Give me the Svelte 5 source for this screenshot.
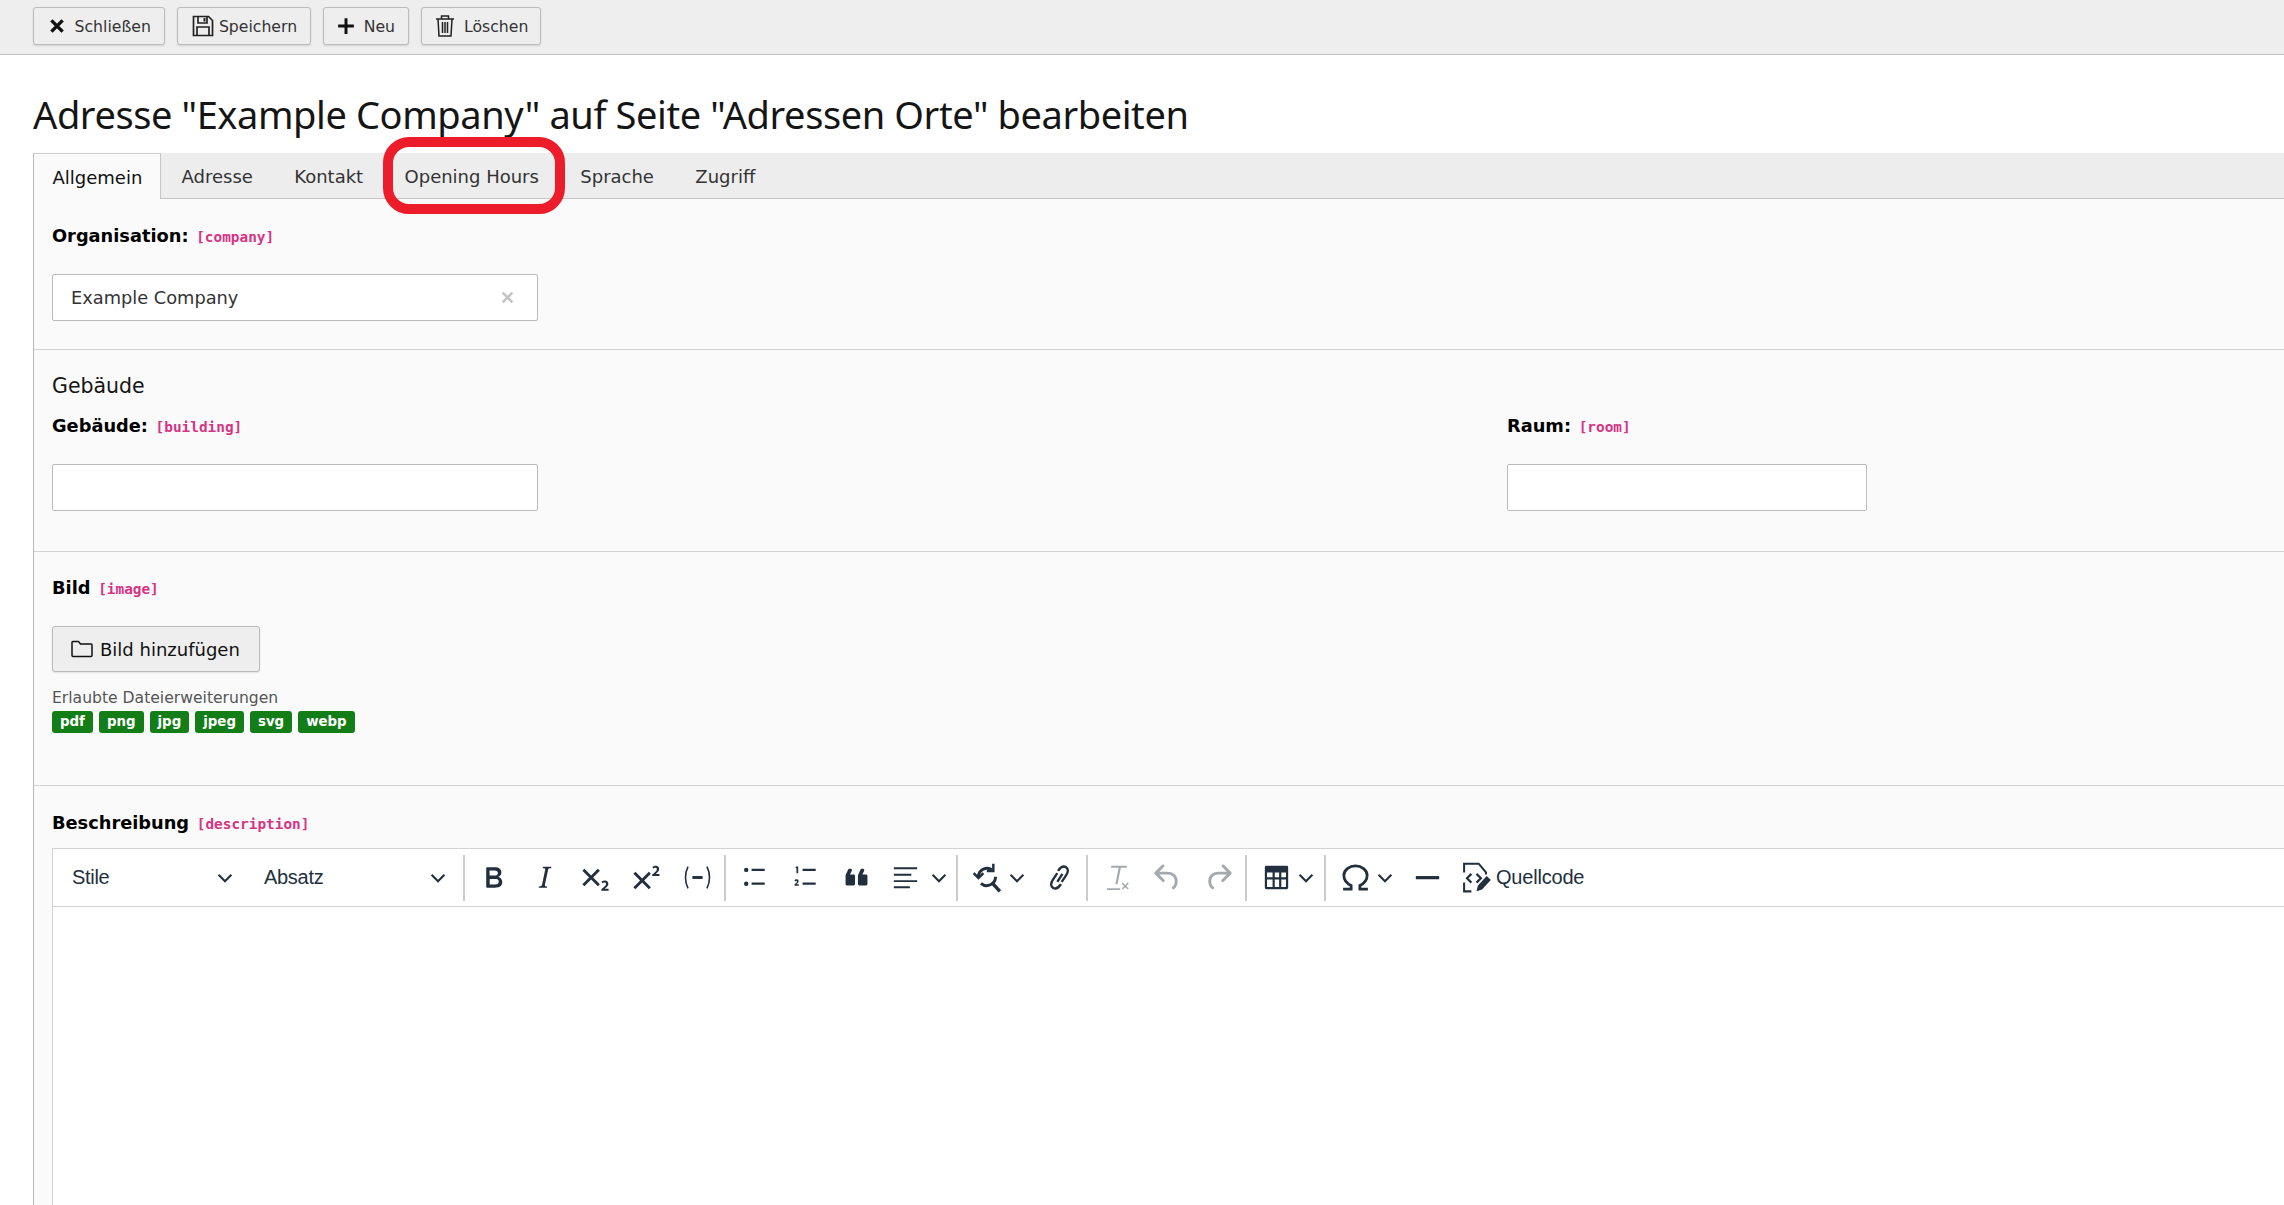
<script>
	const tabs = ['Allgemein', 'Adresse', 'Kontakt', 'Opening Hours', 'Sprache', 'Zugriff'];
	const exts = ['pdf', 'png', 'jpg', 'jpeg', 'svg', 'webp'];
</script>

{#snippet chevron()}
	<svg class="chev" viewBox="0 0 10 10"><path d="M1 3l4 4 4-4" fill="none" stroke="#222f3e" stroke-width="1.300" /></svg>
{/snippet}

<div class="page">
	<header class="topbar">
		<button class="tbtn close">
			<svg width="18" height="18" viewBox="0 0 16 16"><path d="M3 3l10 10M13 3L3 13" stroke="#111" stroke-width="3" /></svg>
			<span class="sp">Schließen</span>
		</button>
		<button class="tbtn save">
			<svg width="24" height="24" viewBox="0 0 24 24" fill="none" stroke="#222" stroke-width="1.700"><path d="M2.500 2.500h15l4 4v15h-19z" /><path d="M7 2.500v6.500h9V2.500M6 21.500V13h12v8.500" /><path d="M12.500 4h2v3.500h-2z" fill="#222" stroke="none" /></svg>
			<span>Speichern</span>
		</button>
		<button class="tbtn">
			<svg width="18" height="18" viewBox="0 0 16 16"><path d="M8 1v14M1 8h14" stroke="#111" stroke-width="2.600" /></svg>
			<span class="sp">Neu</span>
		</button>
		<button class="tbtn del">
			<svg width="22" height="24" viewBox="0 0 22 24" fill="none" stroke="#222" stroke-width="1.500"><path d="M2 5h18M7.500 5V2h7v3M4 5l1 17h12l1-17M8.500 8v11M11 8v11M13.500 8v11" /></svg>
			<span class="sp">Löschen</span>
		</button>
	</header>

	<h1>Adresse "Example Company" auf Seite "Adressen Orte" bearbeiten</h1>

	<div class="panel">
		<nav class="tabs">
			{#each tabs as tab, i}
				<span class="tab" class:active={i === 0}>{tab}</span>
			{/each}
		</nav>
		<div class="marker"></div>

		<section class="org">
			<div class="label"><b>Organisation:</b> <code>[company]</code></div>
			<div class="input wide">
				<span>Example Company</span>
				<svg width="13" height="13" viewBox="0 0 12 12"><path d="M1.500 1.500l9 9M10.500 1.500l-9 9" stroke="#c4c4c4" stroke-width="2.400" /></svg>
			</div>
		</section>

		<section class="building">
			<h2>Gebäude</h2>
			<div class="cols">
				<div>
					<div class="label"><b>Gebäude:</b> <code>[building]</code></div>
					<div class="input wide"></div>
				</div>
				<div>
					<div class="label"><b>Raum:</b> <code>[room]</code></div>
					<div class="input narrow"></div>
				</div>
			</div>
		</section>

		<section class="image">
			<div class="label"><b>Bild</b> <code>[image]</code></div>
			<button class="add">
				<svg width="22" height="18" viewBox="0 0 22 18" fill="none" stroke="#111" stroke-width="1.500"><path d="M1 2.500a1 1 0 011-1h5.500l2 2.500H20a1 1 0 011 1V15.500a1 1 0 01-1 1H2a1 1 0 01-1-1z" /></svg>
				Bild hinzufügen
			</button>
			<div class="hint">Erlaubte Dateierweiterungen</div>
			<div class="badges">
				{#each exts as ext}
					<span class="badge">{ext}</span>
				{/each}
			</div>
		</section>

		<section class="desc">
			<div class="label"><b>Beschreibung</b> <code>[description]</code></div>
			<div class="editor">
				<div class="etools">
					<div class="drop d1"><span>Stile</span>{@render chevron()}</div>
					<div class="drop d2"><span>Absatz</span>{@render chevron()}</div>
					<i class="sep"></i>
					<div class="b"><svg viewBox="0 0 24 24"><path d="M7.800 19c-.3 0-.5 0-.6-.2l-.2-.5V5.700c0-.2 0-.4.2-.5l.6-.2h5c1.500 0 2.700.3 3.500 1 .7.6 1.100 1.400 1.100 2.500a3 3 0 01-.6 1.900c-.4.6-1 1-1.600 1.200.4.1.9.3 1.300.6s.8.7 1 1.200c.4.4.5 1 .5 1.600 0 1.300-.4 2.300-1.300 3-.8.7-2.100 1-3.800 1H7.800zm5-8.300c.6 0 1.200-.1 1.600-.5.4-.3.6-.7.6-1.300 0-1.100-.8-1.700-2.300-1.700H9.300v3.500h3.400zm.5 6c.7 0 1.300-.1 1.700-.4.400-.4.6-.9.6-1.500s-.2-1-.7-1.400c-.4-.3-1-.4-2-.4H9.400v3.800h4z" /></svg></div>
					<div class="b"><svg viewBox="0 0 24 24"><path d="M16.700 4.700l-.1.900h-.3c-.6 0-1 0-1.400.3-.3.3-.4.600-.5 1.100l-2.100 9.800v.6c0 .5.4.8 1.400.8h.2l-.2.8H8l.2-.8h.2c1.100 0 1.800-.5 2-1.500l2-9.800.1-.5c0-.6-.4-.8-1.400-.8h-.3l.2-.9h5.800z" /></svg></div>
					<div class="b"><svg viewBox="0 0 24 24"><path d="M10.400 12l4.600 4.600-1.400 1.400L9 13.400 4.400 18 3 16.600 7.600 12 3 7.400 4.400 6 9 10.600 13.600 6 15 7.400 10.400 12zM21 21h-5v-1l1-.8 1.700-1.600c.3-.4.5-.8.5-1.200 0-.3 0-.6-.2-.7-.2-.2-.5-.3-.9-.3a2 2 0 00-.8.2l-.7.3-.4-1.100 1-.6 1.200-.2c.8 0 1.400.3 1.800.7.4.4.6.9.6 1.500s-.2 1.100-.5 1.600a8 8 0 01-1.300 1.300l-.6.6h2.600V21z" /></svg></div>
					<div class="b"><svg viewBox="0 0 24 24"><path d="M15 9.400L10.400 14l4.600 4.600-1.400 1.400L9 15.400 4.400 20 3 18.600 7.600 14 3 9.400 4.400 8 9 12.600 13.600 8 15 9.400zm5.900 1.600h-5v-1l1-.8 1.700-1.600c.3-.5.5-.9.5-1.300 0-.3 0-.5-.2-.7-.2-.2-.5-.3-.9-.3l-.8.2-.7.4-.4-1.200c.2-.2.5-.4 1-.5.3-.2.8-.2 1.200-.2.8 0 1.400.2 1.800.6.4.4.6 1 .6 1.600 0 .5-.2 1-.5 1.500l-1.300 1.400-.6.5h2.600V11z" /></svg></div>
					<div class="b"><svg viewBox="0 0 24 24" fill="none" stroke="#222f3e"><path d="M5.500 4.500c-2.300 4.500-2.300 10.500 0 15M18.500 4.500c2.300 4.500 2.300 10.500 0 15" stroke-width="1.100" /><path d="M8.500 12h7" stroke-width="2" /></svg></div>
					<i class="sep"></i>
					<div class="b"><svg viewBox="0 0 24 24"><path d="M10 6h9v1.500h-9zM10 15.500h9V17h-9z" /><circle cx="6.300" cy="6.800" r="1.500" /><circle cx="6.300" cy="16.300" r="1.500" /></svg></div>
					<div class="b"><svg viewBox="0 0 24 24"><path d="M10 6h9v1.500h-9zM10 15.500h9V17h-9z" /><path d="M5.500 4.500h1.500v4.500h-1.200V5.500h-.7zM4.500 13.700c.4-.5 2.800-.9 2.800.8 0 1.100-1 1.500-1.600 2.200h1.700v1H4.500v-1c.7-.8 1.700-1.300 1.700-2 0-.6-.9-.4-1.400 0z" /></svg></div>
					<div class="b"><svg viewBox="0 0 24 24"><g transform="rotate(180 12 12)"><path d="M7.500 18h.9c.4 0 .7-.2.900-.6L11 13.500V7.600c0-.6-.4-1-1-1H5.500a1 1 0 00-1 1v5.500c0 .6.4 1 1 1H8l-1.300 2.600a1 1 0 00.8 1.300zm8.500 0h.9c.4 0 .7-.2.900-.6L19.500 13.500V7.600c0-.6-.4-1-1-1H14a1 1 0 00-1 1v5.500c0 .6.4 1 1 1h2.500l-1.300 2.600a1 1 0 00.8 1.300z" /></g></svg></div>
					<div class="split al">
						<svg viewBox="0 0 24 24"><path d="M4 5h16v1.300H4zM4 9.500h12v1.300H4zM4 13.800h16v1.300H4zM4 18h11v1.300H4z" /></svg>
						{@render chevron()}
					</div>
					<i class="sep"></i>
					<div class="split">
						<svg viewBox="0 0 24 24" fill="none" stroke="#222f3e" stroke-width="2"><path d="M17.500 11.500a6 6 0 01-10 4.500M5.700 11.500a6.200 6.200 0 019.300-5" /><path d="M15 15.500l5.500 6" stroke-width="2.400" /><path d="M2.500 9l3.300 3.300L9.200 9M16 2.500v5h-4.500" stroke-width="1.700" /></svg>
						{@render chevron()}
					</div>
					<div class="b"><svg viewBox="0 0 24 24" fill="none" stroke="#222f3e" stroke-width="1.600"><path d="M10.500 9l-3 4.500c-1.700 2.500-1.600 4.500 0 5.500s3.700.2 5.300-2.200l.2-.3M13.500 15l3-4.500c1.700-2.500 1.600-4.500 0-5.500s-3.700-.2-5.300 2.200l-.2.300M14 9.500L10.500 15" /></svg></div>
					<i class="sep"></i>
					<div class="b off"><svg viewBox="0 0 24 24"><path d="M8.400 4h10.700l-.1 1.300h-4l-2.300 11.400h-1.500L13.500 5.300H8.200zM5.500 19.300h9v1.200h-9zM16.300 15.500l1.700 1.700 1.700-1.700.7.700-1.700 1.700 1.700 1.700-.7.700-1.700-1.700-1.700 1.700-.7-.7 1.700-1.700-1.700-1.700z" /></svg></div>
					<div class="b off"><svg viewBox="0 0 24 24"><path d="M6.400 8H12c3.700 0 6.200 2 6.800 5.100.6 2.700-.4 5.600-2.300 6.800a1 1 0 01-1-1.800c1.100-.6 1.800-2.700 1.400-4.600-.5-2.100-2.100-3.500-4.900-3.500H6.400l3.300 3.300a1 1 0 11-1.400 1.400l-5-5a1 1 0 010-1.400l5-5a1 1 0 011.400 1.400L6.400 8z" /></svg></div>
					<div class="b off"><svg viewBox="0 0 24 24"><g transform="matrix(-1 0 0 1 24 0)"><path d="M6.400 8H12c3.700 0 6.200 2 6.800 5.100.6 2.700-.4 5.600-2.300 6.800a1 1 0 01-1-1.800c1.100-.6 1.800-2.700 1.400-4.600-.5-2.100-2.100-3.500-4.900-3.500H6.400l3.300 3.300a1 1 0 11-1.400 1.400l-5-5a1 1 0 010-1.400l5-5a1 1 0 011.400 1.400L6.400 8z" /></g></svg></div>
					<i class="sep"></i>
					<div class="split">
						<svg viewBox="0 0 24 24"><path fill-rule="evenodd" d="M5 4h14a1 1 0 011 1v14a1 1 0 01-1 1H5a1 1 0 01-1-1V5a1 1 0 011-1zm.5 4.500v3.300h3.800V8.500zm5.300 0v3.300h3V8.500zm4.500 0v3.300h3.200V8.500zM5.500 13.300v5.200h3.800v-5.200zm5.300 0v5.200h3v-5.200zm4.500 0v5.200h3.200v-5.200z" /></svg>
						{@render chevron()}
					</div>
					<i class="sep"></i>
					<div class="split">
						<svg viewBox="0 0 24 24" fill="none" stroke="#222f3e" stroke-width="1.900"><path d="M3.500 20h5.500v-2.500c-3.200-1.500-5-4-5-7C4 6.800 7.800 4 12 4s8 2.800 8 6.500c0 3-1.800 5.500-5 7V20h5.500" /></svg>
						{@render chevron()}
					</div>
					<div class="b"><svg viewBox="0 0 24 24"><path d="M4 11h16v2.200H4z" /></svg></div>
					<div class="src">
						<svg viewBox="0 0 24 24" fill="none" stroke="#222f3e" stroke-width="1.400"><path d="M3.500 8.500V2.500h10l5 6v1.500M3.500 15.500V21.500h5" /><path d="M8.500 9.500L5.500 12.500l3 3M12 9.500l3 3-3 3" stroke-width="1.500" /><path d="M12 21.500l1-4 6-6.500 2.800 2.700-6 6.500z" fill="#222f3e" stroke="none" /></svg>
						<span>Quellcode</span>
					</div>
				</div>
			</div>
		</section>
	</div>
</div>

<style>
	:global(body) {
		margin: 0;
		background: #fff;
	}

	.page {
		height: 1205px;
		overflow: hidden;
		font-family: "DejaVu Sans", Verdana, sans-serif;
		color: #212424;
	}

	.topbar {
		display: flex;
		gap: 12px;
		height: 55px;
		padding: 7px 0 0 33px;
		box-sizing: border-box;
		background: #eeeeee;
		border-bottom: 1px solid #c3c3c3;
	}

	.tbtn {
		display: flex;
		align-items: center;
		justify-content: center;
		gap: 8px;
		height: 38px;
		padding: 0 13px;
		background: #eeeeee;
		border: 1px solid #bbbbbb;
		border-radius: 3px;
		box-shadow: 0 1px 2px rgba(0, 0, 0, 0.12);
		font: 15.700px "DejaVu Sans", sans-serif;
		color: #333;
	}

	.tbtn.close {
		padding: 0 13.500px;
	}

	.tbtn.save {
		gap: 4px;
		padding: 0 12.500px;
	}

	.tbtn.del {
		gap: 7px;
		padding: 0 12px;
	}

	.sp {
		margin-left: 1px;
	}

	h1 {
		margin: 0;
		height: 98px;
		box-sizing: border-box;
		font: 400 38px/119px "Noto Sans", sans-serif;
		color: #151515;
		padding-left: 33px;
		letter-spacing: -0.400px;
	}

	.panel {
		position: relative;
		margin-left: 33px;
		background: #fafafa;
		border-left: 1px solid #bbbbbb;
		height: 1052px;
	}

	.tabs {
		display: flex;
		height: 45px;
		background: #ededed;
		border-bottom: 1px solid #c6c6c6;
	}

	.tab {
		padding: 0 20.700px;
		line-height: 48px;
		font-size: 18px;
		color: #333;
	}

	.tab.active {
		padding: 0 17.500px 0 18.500px;
		height: 46px;
		background: #fafafa;
		border-top: 1px solid #cfcfcf;
		border-right: 1px solid #c6c6c6;
		box-sizing: border-box;
		color: #111;
	}

	.marker {
		position: absolute;
		left: 349px;
		top: -16px;
		width: 162px;
		height: 57px;
		border: 10px solid #ec1c2b;
		border-radius: 26px;
	}

	section {
		padding: 0 0 0 18px;
		border-bottom: 1px solid #d2d2d2;
		box-sizing: border-box;
	}

	.org {
		height: 151px;
		padding-top: 27px;
	}

	.building {
		height: 202px;
		padding-top: 24px;
	}

	.image {
		height: 234px;
		padding-top: 26px;
	}

	.desc {
		padding-top: 27px;
		border-bottom: none;
	}

	.label {
		font-size: 17.800px;
		line-height: 20px;
		height: 20px;
		color: #000;
	}

	.label code {
		margin-left: 2px;
		font: 700 14.400px "DejaVu Sans Mono", "Liberation Mono", monospace;
		color: #d63384;
	}

	.input {
		display: flex;
		align-items: center;
		justify-content: space-between;
		height: 47px;
		margin-top: 28px;
		padding: 0 23px 0 18px;
		box-sizing: border-box;
		background: #fff;
		border: 1px solid #bbbbbb;
		border-radius: 2px;
		font-size: 17.800px;
		color: #333;
	}

	.wide {
		width: 486px;
	}

	.narrow {
		width: 360px;
	}

	h2 {
		margin: 0 0 18px;
		font-size: 20.500px;
		font-weight: 400;
		line-height: 24px;
		color: #151515;
	}

	.cols {
		display: flex;
		gap: 969px;
	}

	.cols > div:first-child {
		width: 486px;
		flex: none;
	}

	.add {
		display: flex;
		align-items: center;
		gap: 7px;
		width: 208px;
		height: 46px;
		margin-top: 28px;
		padding: 0 0 0 18px;
		box-sizing: border-box;
		background: #eeeeee;
		border: 1px solid #bbbbbb;
		border-radius: 3px;
		box-shadow: 0 1px 2px rgba(0, 0, 0, 0.1);
		font: 18px "DejaVu Sans", sans-serif;
		color: #111;
	}

	.hint {
		margin-top: 17px;
		font-size: 15.600px;
		line-height: 18px;
		color: #555;
	}

	.badges {
		display: flex;
		gap: 6px;
		margin-top: 4px;
	}

	.badge {
		height: 22px;
		padding: 0 8px;
		background: #137d17;
		border-radius: 3px;
		font: 700 13.350px/22px "DejaVu Sans", sans-serif;
		color: #fff;
	}

	.editor {
		margin-top: 15px;
		height: 400px;
		background: #fff;
		border: 1px solid #d2d2d2;
		border-right: none;
	}

	.etools {
		display: flex;
		align-items: center;
		height: 57px;
		border-bottom: 1px solid #d2d2d2;
		font: 20px "Liberation Sans", Arial, sans-serif;
		color: #222f3e;
	}

	.etools svg {
		fill: #222f3e;
	}

	.etools svg[fill="none"] {
		fill: none;
	}

	.drop {
		display: flex;
		align-items: center;
		justify-content: space-between;
		box-sizing: border-box;
		padding-left: 19px;
		letter-spacing: -0.300px;
	}

	.d1 {
		width: 192px;
		padding-right: 12px;
	}

	.d2 {
		width: 217px;
		padding-right: 16px;
	}

	.chev {
		width: 16px;
		height: 16px;
		flex: none;
	}

	.sep {
		flex: none;
		width: 2px;
		height: 46px;
		margin: 0 3px 0 1px;
		background: #cccccc;
	}

	.b {
		flex: none;
		display: flex;
		justify-content: center;
		width: 51px;
	}

	.b svg,
	.split > svg:not(.chev),
	.src > svg {
		width: 35px;
		height: 35px;
		flex: none;
	}

	.b.off svg {
		fill: #a5a9ae;
	}

	.split {
		flex: none;
		display: flex;
		align-items: center;
		width: 73px;
		padding-left: 9px;
		box-sizing: border-box;
	}

	.split .chev {
		margin-left: 4px;
	}

	.split.al {
		padding-left: 6px;
	}

	.split.al .chev {
		margin-left: 8px;
	}

	.src {
		display: flex;
		align-items: center;
		gap: 2px;
		padding-left: 6px;
		letter-spacing: -0.200px;
	}
</style>
